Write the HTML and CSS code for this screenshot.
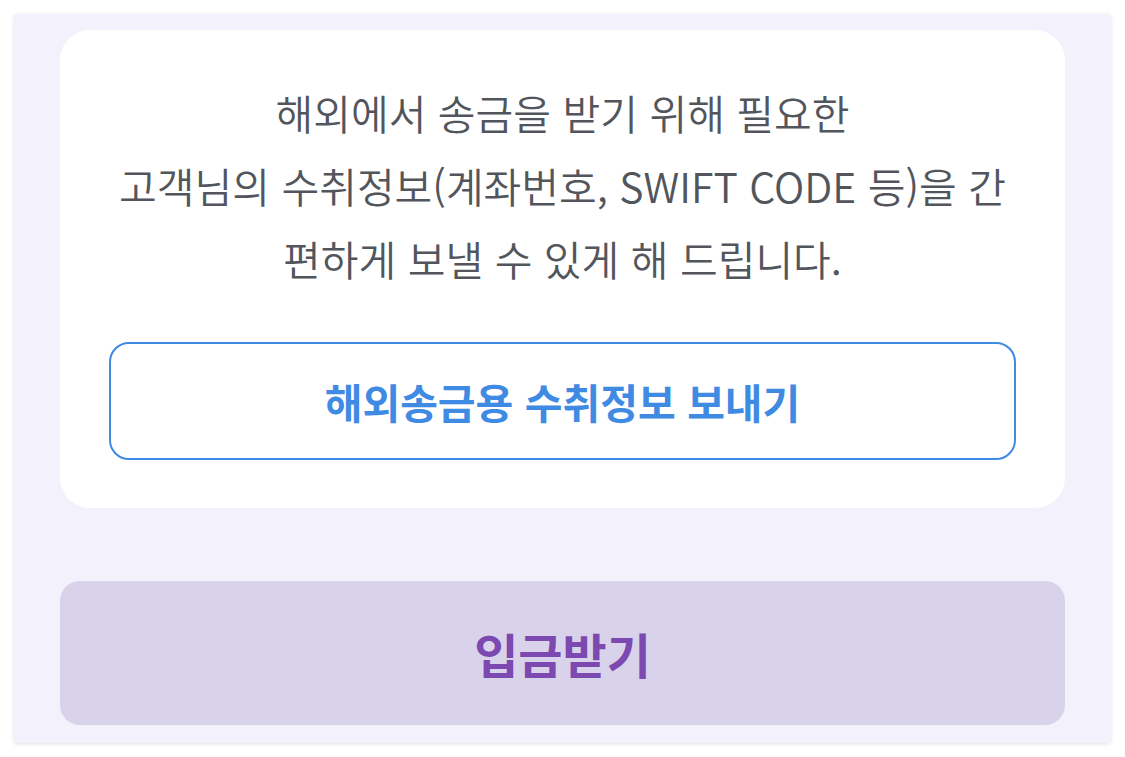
FILE: index.html
```html
<!DOCTYPE html>
<html lang="ko">
<head>
<meta charset="utf-8">
<link rel="stylesheet" href="styles.css">
</head>
<body>
<div class="panel">
  <div class="card">
    <p class="desc">해외에서 송금을 받기 위해 필요한<br>고객님의 수취정보(계좌번호, SWIFT CODE 등)을 간<br>편하게 보낼 수 있게 해 드립니다.</p>
    <button class="btn-outline" type="button">해외송금용 수취정보 보내기</button>
  </div>
  <button class="btn-receive" type="button">입금받기</button>
</div>
</body>
</html>
```
FILE: styles.css
```css
html, body {
  margin: 0;
  padding: 0;
  background: #ffffff;
}
body {
  font-family: "Noto Sans CJK KR", "Noto Sans", sans-serif;
  padding: 14px;
  width: 1125px;
  height: 757px;
  box-sizing: border-box;
}
.panel {
  width: 1097px;
  height: 729px;
  box-sizing: border-box;
  background: #f3f1fb;
  border-radius: 4px;
  box-shadow: 0 1px 4px rgba(0, 0, 0, 0.12);
  padding: 16px 46px 0 46px;
  display: flex;
  flex-direction: column;
}
.card {
  background: #ffffff;
  border-radius: 30px;
  height: 478px;
  box-sizing: border-box;
  padding: 46px 49px 0 49px;
  display: flex;
  flex-direction: column;
}
.desc {
  margin: 0;
  text-align: center;
  font-size: 41px;
  line-height: 73px;
  color: #52565c;
  font-weight: 350;
  letter-spacing: 0;
}
.btn-outline {
  margin-top: 47px;
  height: 118px;
  border: 2.5px solid #3f8ae2;
  border-radius: 20px;
  background: #ffffff;
  color: #3f8ae2;
  font-family: inherit;
  font-size: 41px;
  font-weight: 700;
  letter-spacing: 0;
}
.btn-receive {
  margin-top: 73px;
  height: 144px;
  border: none;
  border-radius: 20px;
  background: #d9d2eb;
  color: #7b49b0;
  font-family: inherit;
  font-size: 48px;
  font-weight: 700;
  letter-spacing: 0;
}
```
